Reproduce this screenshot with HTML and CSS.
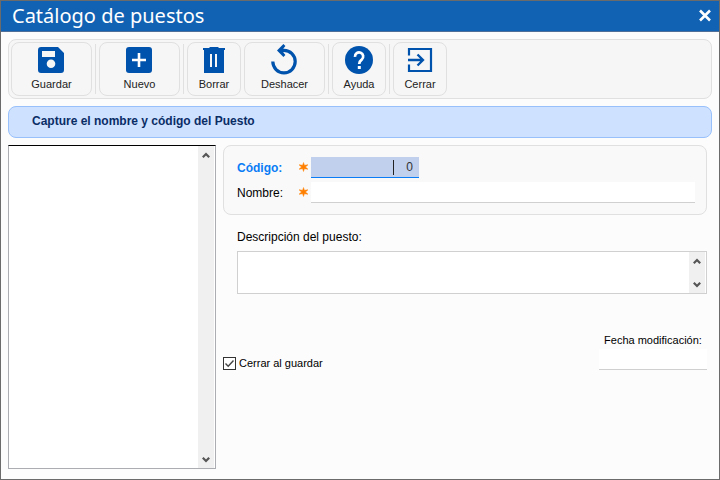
FILE: index.html
```html
<!DOCTYPE html>
<html lang="es">
<head>
<meta charset="utf-8">
<title>Catálogo de puestos</title>
<link rel="stylesheet" href="styles.css">
</head>
<body>
<div class="window">
  <header class="titlebar">
    <h1>Catálogo de puestos</h1>
    <button class="close" type="button" aria-label="Cerrar ventana">
      <svg width="14" height="14" viewBox="0 0 14 14"><path d="M2 1.5L12 11.5M12 1.5L2 11.5" stroke="#fff" stroke-width="2.6" fill="none"/></svg>
    </button>
  </header>
  <main class="content">
    <nav class="toolbar">
      <button class="tool wide" type="button">
        <svg width="28" height="28" viewBox="0 0 28 28"><path fill="#0053ad" fill-rule="evenodd" d="M3 1H20L26 7V24Q26 27 23 27H3Q0 27 0 24V4Q0 1 3 1ZM4 5V11H17V5ZM13 13.5A4.3 4.3 0 1 0 13 22.1A4.3 4.3 0 1 0 13 13.5Z"/></svg>
        <span>Guardar</span>
      </button>
      <i class="sep"></i>
      <button class="tool wide" type="button">
        <svg width="28" height="28" viewBox="0 0 28 28"><rect x="0" y="1" width="26" height="26" rx="3" fill="#0053ad"/><path d="M13 7V21M6 14H20" stroke="#fff" stroke-width="2.6"/></svg>
        <span>Nuevo</span>
      </button>
      <i class="sep"></i>
      <button class="tool" type="button">
        <svg width="28" height="28" viewBox="0 0 28 28"><path fill="#0053ad" fill-rule="evenodd" d="M3 2H9L10 1H18L19 2H25V4H24V27H4V4H3ZM10 8V21H12V8ZM15 8V21H17V8Z"/></svg>
        <span>Borrar</span>
      </button>
      <button class="tool wide" type="button">
        <svg width="28" height="28" viewBox="0 0 28 28"><path d="M10 4.4H13A11.2 11.2 0 1 1 1.8 15.6" fill="none" stroke="#0053ad" stroke-width="3.2"/><path d="M6 4.4L12.4 -2L14.4 0L12.4 2.6V6.4L14.4 9L12.4 11Z" fill="#0053ad"/></svg>
        <span>Deshacer</span>
      </button>
      <i class="sep"></i>
      <button class="tool" type="button">
        <svg width="28" height="28" viewBox="0 0 28 28"><circle cx="14" cy="14" r="14" fill="#0053ad"/><path d="M10 10.8A4.1 4.1 0 1 1 16.8 13.6C15 15 14.2 15.4 14.2 18" fill="none" stroke="#fff" stroke-width="2.7"/><rect x="12.8" y="20" width="3" height="3" fill="#fff"/></svg>
        <span>Ayuda</span>
      </button>
      <i class="sep"></i>
      <button class="tool" type="button">
        <svg width="28" height="28" viewBox="0 0 28 28"><path d="M3 9.5V3H25V25H3V18.5" fill="none" stroke="#0053ad" stroke-width="2.2"/><path d="M2 14H17M11.5 8.5L17 14L11.5 19.5" fill="none" stroke="#0053ad" stroke-width="2.3"/></svg>
        <span>Cerrar</span>
      </button>
    </nav>
    <p class="banner">Capture el nombre y código del Puesto</p>
    <div class="columns">
      <section class="list">
        <select class="list-items" size="10" aria-label="Puestos"></select>
        <div class="scrollbar">
          <button type="button" aria-label="Subir"><svg width="8" height="7" viewBox="0 0 8 7"><path d="M.8 5.2L4 2L7.2 5.2" stroke="#555" stroke-width="2.2" fill="none"/></svg></button>
          <button type="button" aria-label="Bajar"><svg width="8" height="7" viewBox="0 0 8 7"><path d="M.8 1.8L4 5L7.2 1.8" stroke="#555" stroke-width="2.2" fill="none"/></svg></button>
        </div>
      </section>
      <form class="form">
        <div class="panel">
          <label class="active" for="codigo">Código:</label>
          <svg class="star" width="9" height="10" viewBox="0 0 8 8"><path d="M4 0L4.8 2.4L8 2L5.8 4L8 6L4.8 5.6L4 8L3.2 5.6L0 6L2.2 4L0 2L3.2 2.4Z" fill="#ff8000" stroke="#ff8000" stroke-width=".4"/></svg>
          <div class="code-box"><input id="codigo" type="text" value="0"><span class="caret"></span></div>
          <label for="nombre">Nombre:</label>
          <svg class="star" width="9" height="10" viewBox="0 0 8 8"><path d="M4 0L4.8 2.4L8 2L5.8 4L8 6L4.8 5.6L4 8L3.2 5.6L0 6L2.2 4L0 2L3.2 2.4Z" fill="#ff8000" stroke="#ff8000" stroke-width=".4"/></svg>
          <input id="nombre" class="line-input" type="text">
        </div>
        <div class="description">
          <label for="descripcion">Descripción del puesto:</label>
          <div class="memo">
            <textarea id="descripcion"></textarea>
            <div class="scrollbar">
              <button type="button" aria-label="Subir"><svg width="8" height="7" viewBox="0 0 8 7"><path d="M.8 5.2L4 2L7.2 5.2" stroke="#555" stroke-width="2.2" fill="none"/></svg></button>
              <button type="button" aria-label="Bajar"><svg width="8" height="7" viewBox="0 0 8 7"><path d="M.8 1.8L4 5L7.2 1.8" stroke="#555" stroke-width="2.2" fill="none"/></svg></button>
            </div>
          </div>
        </div>
        <div class="bottom">
          <label class="check"><input type="checkbox" checked>Cerrar al guardar</label>
          <div class="date">
            <label for="fecha">Fecha modificación:</label>
            <input id="fecha" class="line-input" type="text">
          </div>
        </div>
      </form>
    </div>
  </main>
</div>
</body>
</html>
```
FILE: styles.css
```css
* { box-sizing: border-box; }
body {
  margin: 0;
  font: 12px/16px "Liberation Sans", Arial, sans-serif;
  color: #000;
}
button, input, select, textarea { font: inherit; margin: 0; border: 0; padding: 0; border-radius: 0; outline: 0; }
svg { display: block; overflow: visible; }

.window {
  display: flex;
  flex-direction: column;
  min-height: 100vh;
  border: 1px solid #6b6b6b;
  background: #fcfcfc;
}
.titlebar {
  display: flex;
  align-items: center;
  justify-content: space-between;
  height: 31px;
  padding: 0 7px 0 11px;
  background: #1262b3;
  border-bottom: 1px solid #4f6f98;
}
.titlebar h1 {
  margin: 0;
  font: 400 20px/30px "Noto Sans", "Open Sans", sans-serif;
  color: #fff;
}
.close { background: none; }

.content { flex: 1; display: flex; flex-direction: column; padding: 7px 7px 10px; }
.toolbar {
  display: flex;
  gap: 3px;
  padding: 2px;
  height: 60px;
  background: #f6f6f6;
  border: 1px solid #e0e0e0;
  border-radius: 8px;
}
.tool {
  display: flex;
  flex-direction: column;
  align-items: center;
  justify-content: space-between;
  width: 54px;
  padding: 3px 0 4px;
  height: 54px;
  background: #f6f6f6;
  border: 1px solid #e0e0e0;
  border-radius: 8px;
  font-size: 11px;
  line-height: 14px;
  color: #222;
}
.tool.wide { width: 81px; }
.sep { width: 1px; margin: 2px 0; background: #e0e0e0; }

.banner {
  margin: 7px 0;
  height: 32px;
  padding: 0 23px;
  line-height: 28px;
  font-weight: 700;
  color: #0a2d66;
  background: #cee1ff;
  border: 1px solid #98c0fb;
  border-radius: 8px;
}

.columns { flex: 1; display: flex; gap: 7px; }
.list {
  display: flex;
  width: 208px;
  padding-right: 1px;
  background: #fff;
  border: 1px solid #abadb3;
  border-top-color: #000;
}
.list-items { flex: 1; min-width: 0; background: #fff; overflow: hidden; }
.scrollbar {
  display: flex;
  flex-direction: column;
  justify-content: space-between;
  width: 16px;
  background: #f0f0f0;
}
.scrollbar button { display: grid; place-items: center; height: 18px; background: none; }

.form { flex: 1; min-width: 0; padding-right: 5px; }
.panel {
  display: grid;
  grid-template-columns: 62px 12px 1fr;
  row-gap: 4px;
  align-items: center;
  padding: 11px 11px 11px 13px;
  border: 1px solid #e0e0e0;
  border-radius: 8px;
  background: #f9f9f9;
}
.active { font-weight: 700; color: #0a7cf5; }
.star { margin-bottom: 2px; }
.code-box { position: relative; width: 108px; height: 21px; }
.code-box input {
  width: 100%;
  height: 21px;
  padding-right: 6px;
  text-align: right;
  color: #333;
  background: #c0d0ed;
  border-bottom: 1px solid #0a7cf5;
}
.caret { position: absolute; left: 82px; top: 3px; width: 1px; height: 15px; background: #222; }
.line-input { width: 100%; height: 21px; background: #fff; border-bottom: 1px solid #d0d0d0; }

.description { margin: 14px 0 0 14px; }
.description label { display: block; margin-bottom: 6px; }
.memo { display: flex; height: 43px; padding-right: 1px; background: #fff; border: 1px solid #d0d0d0; }
.memo textarea { flex: 1; min-width: 0; resize: none; overflow: hidden; background: #fff; }

.bottom {
  display: flex;
  justify-content: space-between;
  align-items: flex-end;
  margin-top: 38px;
  font-size: 11px;
}
.check { display: flex; align-items: center; gap: 3px; line-height: 14px; }
.check input {
  appearance: none;
  width: 13px;
  height: 13px;
  background: #fff url("data:image/svg+xml,%3Csvg xmlns='http://www.w3.org/2000/svg' viewBox='0 0 11 11'%3E%3Cpath d='M1.5 5.5L4.2 8.2L9.5 2.5' fill='none' stroke='%23444' stroke-width='1.4'/%3E%3C/svg%3E");
  border: 1px solid #333;
}
.date { display: flex; flex-direction: column; gap: 1px; width: 108px; }
.date label { text-align: center; }
```
